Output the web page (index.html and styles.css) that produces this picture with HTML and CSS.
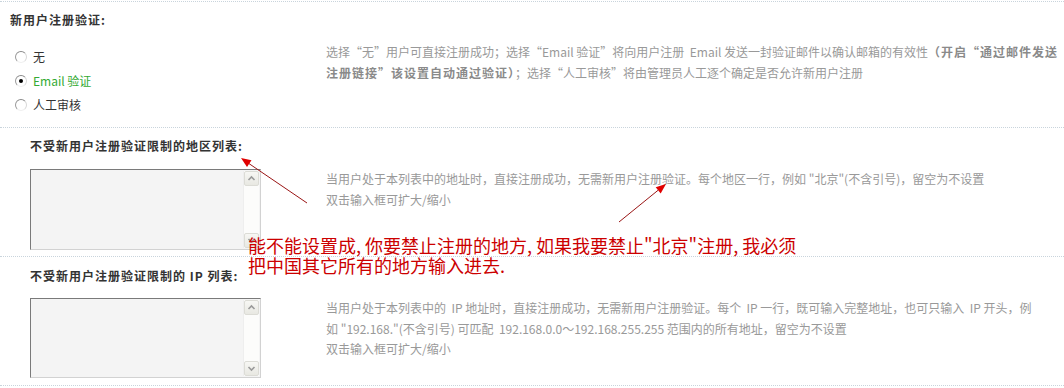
FILE: index.html
```html
<!DOCTYPE html>
<html lang="zh-CN">
<head>
<meta charset="utf-8">
<title>新用户注册验证</title>
<link rel="stylesheet" href="styles.css">
</head>
<body>
<div class="page">
  <div class="sec sec1">
    <div class="title t1">新用户注册验证:</div>
    <div class="row">
      <div class="opts">
        <label class="opt"><input class="radio" type="radio" name="regverify">无</label>
        <label class="opt on"><input class="radio" type="radio" name="regverify" checked>Email 验证</label>
        <label class="opt"><input class="radio" type="radio" name="regverify">人工审核</label>
      </div>
      <div class="desc d1">选择“无”用户可直接注册成功；选择“Email 验证”将向用户注册&nbsp; Email 发送一封验证邮件以确认邮箱的有效性<b>（开启“通过邮件发送<br>注册链接”该设置自动通过验证）</b>；选择“人工审核”将由管理员人工逐个确定是否允许新用户注册</div>
    </div>
  </div>

  <div class="sec sec2">
    <div class="title t2">不受新用户注册验证限制的地区列表:</div>
    <div class="row">
      <div class="ta">
        <textarea class="ta-input"></textarea>
        <div class="sb"><span class="sb-btn up"><svg viewBox="0 0 13 13" width="13" height="13"><path d="M3.5 8 L6.5 5 L9.5 8" fill="none" stroke="#9a9a9a" stroke-width="1.6"/></svg></span><span class="sb-btn down"><svg viewBox="0 0 13 13" width="13" height="13"><path d="M3.5 5 L6.5 8 L9.5 5" fill="none" stroke="#9a9a9a" stroke-width="1.6"/></svg></span></div>
      </div>
      <div class="desc d2">当用户处于本列表中的地址时，直接注册成功，无需新用户注册验证。每个地区一行，例如 "北京"(不含引号)，留空为不设置<br>双击输入框可扩大/缩小</div>
    </div>
  </div>

  <div class="sec sec3">
    <div class="title t2">不受新用户注册验证限制的 IP 列表:</div>
    <div class="row">
      <div class="ta ta3">
        <textarea class="ta-input"></textarea>
        <div class="sb"><span class="sb-btn up"><svg viewBox="0 0 13 13" width="13" height="13"><path d="M3.5 8 L6.5 5 L9.5 8" fill="none" stroke="#9a9a9a" stroke-width="1.6"/></svg></span><span class="sb-btn down"><svg viewBox="0 0 13 13" width="13" height="13"><path d="M3.5 5 L6.5 8 L9.5 5" fill="none" stroke="#9a9a9a" stroke-width="1.6"/></svg></span></div>
      </div>
      <div class="desc d3">当用户处于本列表中的&nbsp; IP 地址时，直接注册成功，无需新用户注册验证。每个&nbsp; IP 一行，既可输入完整地址，也可只输入&nbsp; IP 开头，例<br>如 "192.168."(不含引号) 可匹配&nbsp; 192.168.0.0～192.168.255.255 范围内的所有地址，留空为不设置<br>双击输入框可扩大/缩小</div>
    </div>
  </div>
</div>

<svg class="marks" width="1064" height="388" viewBox="0 0 1064 388">
  <line x1="307" y1="203" x2="249" y2="163.6" stroke="#9a1515" stroke-width="1"/>
  <polygon points="241,158 251.5,160.3 247,166.9" fill="#e00000"/>
  <line x1="619" y1="222" x2="658" y2="190.3" stroke="#9a1515" stroke-width="1"/>
  <polygon points="666,184 660.7,193.4 655.7,187.2" fill="#e00000"/>
</svg>
<div class="remark">能不能设置成, 你要禁止注册的地方, 如果我要禁止"北京"注册, 我必须<br>把中国其它所有的地方输入进去.</div>
</body>
</html>
```

FILE: styles.css
```css
html, body {
  margin: 0;
  background: #fff;
}
body {
  padding-top: 1px;
  font-family: "Noto Sans CJK SC", "Liberation Sans", sans-serif;
  font-size: 12px;
  color: #333;
  overflow: hidden;
  width: 1064px;
  height: 387px;
}
.page {
  white-space: nowrap;
}
.sec {
  border-bottom: 1px dotted #c9d4dc;
}
.sec1 {
  border-top: 1px dotted #c9d4dc;
  padding: 9px 0 10px;
}
.sec2 {
  padding: 9px 0 6px;
}
.sec3 {
  padding: 10px 0 7px;
}
.title {
  font-weight: bold;
  line-height: 18px;
  letter-spacing: 1px;
  color: #333;
}
.t1 {
  padding-left: 10px;
}
.t2 {
  padding-left: 30px;
}
.row {
  display: grid;
  grid-template-columns: 326px auto;
  align-items: start;
}
.sec1 .row {
  margin-top: 12px;
}
.sec2 .row {
  margin-top: 14px;
}
.sec3 .row {
  margin-top: 13px;
}
.opts {
  display: flex;
  flex-direction: column;
  padding: 4px 0 0 15px;
}
.opt {
  display: flex;
  align-items: center;
  height: 24px;
  line-height: 24px;
  color: #333;
}
.opt.on {
  color: #33aa33;
}
.radio {
  -webkit-appearance: none;
  appearance: none;
  box-sizing: border-box;
  width: 12px;
  height: 12px;
  margin: 0 6px 0 0;
  border-radius: 50%;
  border: 1px solid;
  border-color: #8a8a8a #d8d8d8 #f0f0f0 #9a9a9a;
  background: #fff;
  display: grid;
  place-items: center;
}
.radio:checked::after {
  content: "";
  width: 4px;
  height: 4px;
  border-radius: 50%;
  background: #000;
}
.desc {
  color: #999;
}
.d1 {
  line-height: 21px;
}
.d1 b {
  color: #8a8a8a;
  letter-spacing: 1px;
}
.d2 {
  line-height: 21px;
  margin-top: -1px;
}
.d3 {
  line-height: 20.5px;
}
.ta {
  margin-left: 30px;
  width: 231px;
  height: 81px;
  box-sizing: border-box;
  display: flex;
  border: 1px solid;
  border-color: #7a7a7a #d2d2d2 #d2d2d2 #7a7a7a;
  background: #f4f4f4;
}
.ta3 {
  height: 80px;
}
.ta-input {
  flex: 1;
  min-width: 0;
  border: 0;
  margin: 0;
  padding: 2px;
  background: transparent;
  resize: none;
  outline: none;
  font: inherit;
}
.sb {
  width: 15px;
  margin: 1px 1px 1px 0;
  display: flex;
  flex-direction: column;
  justify-content: space-between;
  background: #fcfcfb;
  border-left: 1px solid #eeeeee;
}
.sb-btn {
  box-sizing: border-box;
  width: 15px;
  height: 15px;
  display: flex;
  align-items: center;
  justify-content: center;
  border: 1px solid #dcdcd6;
  border-radius: 2px;
  background: linear-gradient(#f7f7f4, #e8e8e2);
}
.marks {
  position: absolute;
  left: 0;
  top: 0;
  pointer-events: none;
}
.remark {
  position: absolute;
  left: 248px;
  top: 235px;
  font-size: 18px;
  line-height: 20px;
  color: #cc0000;
  white-space: nowrap;
}
```
